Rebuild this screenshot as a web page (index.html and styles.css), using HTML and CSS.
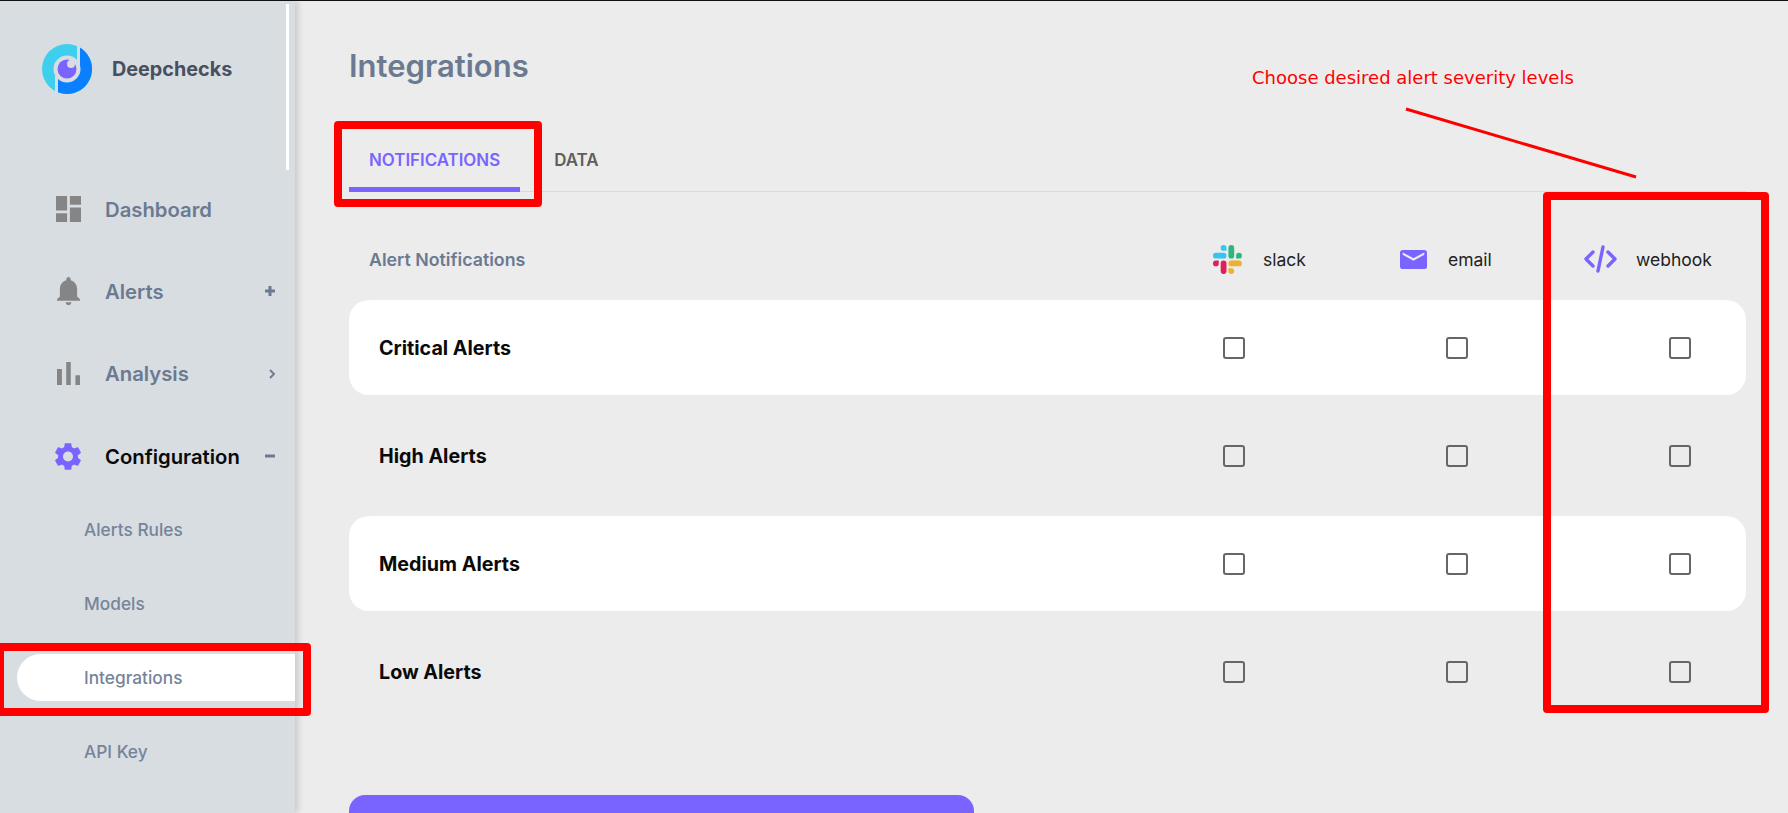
FILE: index.html
```html
<!DOCTYPE html>
<html lang="en">
<head>
    <meta charset="UTF-8">
    <title>Integrations - Deepchecks</title>
    <link rel="stylesheet" href="styles.css">
</head>
<body>
    <div class="app">
        <aside class="sidebar">
            <div class="scroll-thumb"></div>
            <div class="brand">
                <svg class="brand-logo" viewBox="0 0 50 50">
                    <circle cx="25" cy="25" r="25" fill="#3ecfee"/>
                    <path d="M38 3.6A25 25 0 0 1 16 48.3V25H38Z" fill="#0a80ff"/>
                    <path d="M14.5 25V50M36.5 0V25" stroke="#d8dde2" stroke-width="3"/>
                    <circle cx="25" cy="25" r="13.5" fill="#d8dde2"/>
                    <circle cx="25" cy="25" r="9.5" fill="#7964ff"/>
                    <circle cx="29" cy="20" r="4" fill="#d8dde2"/>
                </svg>
                <span class="brand-name">Deepchecks</span>
            </div>
            <nav class="nav">
                <div class="nav-item">
                    <span class="nav-icon">
                        <svg width="25" height="26" viewBox="3 3 18 18" preserveAspectRatio="none"><path d="M3 13h8V3H3v10zm0 8h8v-6H3v6zm10 0h8V11h-8v10zm0-18v6h8V3h-8z"/></svg>
                    </span>
                    <span class="nav-label">Dashboard</span>
                </div>
                <div class="nav-item">
                    <span class="nav-icon">
                        <svg width="23" height="28" viewBox="4 2.5 16 19.5" preserveAspectRatio="none"><path d="M12 22c1.1 0 2-.9 2-2h-4c0 1.1.89 2 2 2zm6-6v-5c0-3.07-1.64-5.64-4.5-6.32V4c0-.83-.67-1.5-1.5-1.5s-1.5.67-1.5 1.5v.68C7.63 5.36 6 7.92 6 11v5l-2 2v1h16v-1l-2-2z"/></svg>
                    </span>
                    <span class="nav-label">Alerts</span>
                    <span class="nav-mark">
                        <svg width="10" height="10" viewBox="0 0 10 10"><path d="M5 0V10M0 5H10" stroke="#6b7a90" stroke-width="3"/></svg>
                    </span>
                </div>
                <div class="nav-item">
                    <span class="nav-icon">
                        <svg width="23" height="23" viewBox="5 5 14 14"><path d="M5 9.2h3V19H5zM10.6 5h2.8v14h-2.8zm5.6 8H19v6h-2.8z"/></svg>
                    </span>
                    <span class="nav-label">Analysis</span>
                    <span class="nav-mark nav-mark-chevron">
                        <svg width="10" height="10" viewBox="0 0 10 10"><path d="M3 1L7 5L3 9" fill="none" stroke="#6b7a90" stroke-width="1.8"/></svg>
                    </span>
                </div>
                <div class="nav-item nav-item-open">
                    <span class="nav-icon">
                        <svg width="26" height="27" viewBox="2.6 2.4 18.8 19.2"><path d="M19.14,12.94c0.04-0.3,0.06-0.61,0.06-0.94c0-0.32-0.02-0.64-0.07-0.94l2.03-1.58c0.18-0.14,0.23-0.41,0.12-0.61l-1.92-3.32c-0.12-0.22-0.37-0.29-0.59-0.22l-2.39,0.96c-0.5-0.38-1.03-0.7-1.62-0.94L14.4,2.81c-0.04-0.24-0.24-0.41-0.48-0.41h-3.84c-0.24,0-0.43,0.17-0.47,0.41L9.25,5.35C8.66,5.59,8.12,5.92,7.63,6.29L5.24,5.33c-0.22-0.08-0.47,0-0.59,0.22L2.74,8.87C2.62,9.08,2.66,9.34,2.86,9.48l2.03,1.58C4.84,11.36,4.8,11.69,4.8,12s0.02,0.64,0.07,0.94l-2.03,1.58c-0.18,0.14-0.23,0.41-0.12,0.61l1.92,3.32c0.12,0.22,0.37,0.29,0.59,0.22l2.39-0.96c0.5,0.38,1.03,0.7,1.62,0.94l0.36,2.54c0.05,0.24,0.24,0.41,0.48,0.41h3.84c0.24,0,0.44-0.17,0.47-0.41l0.36-2.54c0.59-0.24,1.13-0.56,1.62-0.94l2.39,0.96c0.22,0.08,0.47,0,0.59-0.22l1.92-3.32c0.12-0.22,0.07-0.47-0.12-0.61L19.14,12.94z M12,15.6c-1.98,0-3.6-1.62-3.6-3.6s1.62-3.6,3.6-3.6s3.6,1.62,3.6,3.6S13.98,15.6,12,15.6z"/></svg>
                    </span>
                    <span class="nav-label">Configuration</span>
                    <span class="nav-mark">
                        <svg width="10" height="10" viewBox="0 0 10 10"><path d="M0 5H10" stroke="#6b7a90" stroke-width="3"/></svg>
                    </span>
                </div>
                <div class="subnav">
                    <a class="sub-item" href="#">Alerts Rules</a>
                    <a class="sub-item" href="#">Models</a>
                    <a class="sub-item active" href="#">Integrations</a>
                    <a class="sub-item" href="#">API Key</a>
                </div>
            </nav>
        </aside>

        <main class="main">
            <h1 class="title">Integrations</h1>
            <div class="tabs">
                <div class="tab active">NOTIFICATIONS</div>
                <div class="tab">DATA</div>
            </div>

            <div class="table-head">
                <div class="head-title">Alert Notifications</div>
                <div class="channel">
                    <svg class="icon-slack" viewBox="0 0 54 54">
                        <path fill="#36C5F0" d="M19.712.133a5.381 5.381 0 0 0-5.376 5.387 5.381 5.381 0 0 0 5.376 5.386h5.376V5.52A5.381 5.381 0 0 0 19.712.133m0 14.365H5.376A5.381 5.381 0 0 0 0 19.884a5.381 5.381 0 0 0 5.376 5.387h14.336a5.381 5.381 0 0 0 5.376-5.387 5.381 5.381 0 0 0-5.376-5.386"/>
                        <path fill="#2EB67D" d="M53.76 19.884a5.381 5.381 0 0 0-5.376-5.386 5.381 5.381 0 0 0-5.376 5.386v5.387h5.376a5.381 5.381 0 0 0 5.376-5.387m-14.336 0V5.52A5.381 5.381 0 0 0 34.048.133a5.381 5.381 0 0 0-5.376 5.387v14.364a5.381 5.381 0 0 0 5.376 5.387 5.381 5.381 0 0 0 5.376-5.387"/>
                        <path fill="#ECB22E" d="M34.048 54a5.381 5.381 0 0 0 5.376-5.387 5.381 5.381 0 0 0-5.376-5.386h-5.376v5.386A5.381 5.381 0 0 0 34.048 54m0-14.365h14.336a5.381 5.381 0 0 0 5.376-5.386 5.381 5.381 0 0 0-5.376-5.387H34.048a5.381 5.381 0 0 0-5.376 5.387 5.381 5.381 0 0 0 5.376 5.386"/>
                        <path fill="#E01E5A" d="M0 34.249a5.381 5.381 0 0 0 5.376 5.386 5.381 5.381 0 0 0 5.376-5.386v-5.387H5.376A5.381 5.381 0 0 0 0 34.25m14.336-.001v14.364A5.381 5.381 0 0 0 19.712 54a5.381 5.381 0 0 0 5.376-5.387V34.25a5.381 5.381 0 0 0-5.376-5.387 5.381 5.381 0 0 0-5.376 5.387"/>
                    </svg>
                    <span>slack</span>
                </div>
                <div class="channel">
                    <svg class="icon-mail" viewBox="2 4 20 16" preserveAspectRatio="none"><path fill="#7964ff" d="M20 4H4c-1.1 0-2 .9-2 2v12c0 1.1.9 2 2 2h16c1.1 0 2-.9 2-2V6c0-1.1-.9-2-2-2zm0 4l-8 5-8-5V6l8 5 8-5v2z"/></svg>
                    <span>email</span>
                </div>
                <div class="channel channel-code">
                    <svg class="icon-code" viewBox="0 0 33 28">
                        <path d="M9 7L2 14L9 21M24 7L31 14L24 21M19 2L14 26" fill="none" stroke="#7964ff" stroke-width="3.4" stroke-linecap="round" stroke-linejoin="round"/>
                    </svg>
                    <span>webhook</span>
                </div>
            </div>

            <div class="rows">
                <div class="row row-white">
                    <div class="row-name">Critical Alerts</div>
                    <input class="check" type="checkbox">
                    <input class="check" type="checkbox">
                    <input class="check" type="checkbox">
                </div>
                <div class="row">
                    <div class="row-name">High Alerts</div>
                    <input class="check" type="checkbox">
                    <input class="check" type="checkbox">
                    <input class="check" type="checkbox">
                </div>
                <div class="row row-white">
                    <div class="row-name">Medium Alerts</div>
                    <input class="check" type="checkbox">
                    <input class="check" type="checkbox">
                    <input class="check" type="checkbox">
                </div>
                <div class="row">
                    <div class="row-name">Low Alerts</div>
                    <input class="check" type="checkbox">
                    <input class="check" type="checkbox">
                    <input class="check" type="checkbox">
                </div>
            </div>

            <div class="save-button"></div>
        </main>
    </div>

    <!-- red markup drawn over the screenshot -->
    <div class="mark mark-tab"></div>
    <div class="mark mark-side"></div>
    <div class="mark mark-column"></div>
    <div class="mark-text">Choose desired alert severity levels</div>
    <svg class="mark-line" width="1788" height="813"><line x1="1406" y1="109" x2="1636" y2="177" stroke="#ff0000" stroke-width="3"/></svg>
</body>
</html>
```

FILE: styles.css
```css
html, body {
    margin: 0;
    height: 100%;
    overflow: hidden;
}
body {
    background: #ececec;
    font-family: 'Inter', sans-serif;
    border-top: 1px solid #111;
    box-sizing: border-box;
}
.app {
    display: flex;
    height: 812px;
    overflow: hidden;
}
.sidebar {
    position: relative;
    flex: 0 0 295px;
    background: #d8dde2;
    box-shadow: 3px 0 6px rgba(0, 0, 0, 0.15);
    z-index: 1;
}
.scroll-thumb {
    position: absolute;
    left: 286px;
    top: 3px;
    width: 3px;
    height: 166px;
    background: #fff;
}
.brand {
    display: flex;
    align-items: center;
    padding: 43px 0 0 42px;
}
.brand-logo {
    width: 50px;
    height: 50px;
}
.brand-name {
    margin-left: 20px;
    font-size: 19.8px;
    font-weight: 700;
    color: #474f60;
}
.nav {
    margin-top: 74px;
}
.nav-item {
    display: flex;
    align-items: center;
    height: 82.33px;
}
.nav-icon {
    display: flex;
    justify-content: center;
    width: 28px;
    margin-left: 54px;
    fill: #858585;
}
.nav-label {
    margin-left: 23px;
    font-size: 20.3px;
    font-weight: 600;
    color: #6b7a90;
}
.nav-mark {
    display: flex;
    margin-left: auto;
    margin-right: 20px;
}
.nav-mark-chevron {
    margin-right: 18px;
}
.nav-item-open .nav-icon {
    fill: #7964ff;
}
.nav-item-open .nav-label {
    color: #0a0a0a;
}
.subnav {
    display: flex;
    flex-direction: column;
    gap: 27px;
    margin: 9px 0 0 17px;
}
.sub-item {
    display: flex;
    align-items: center;
    height: 47px;
    padding-left: 67px;
    font-size: 17.3px;
    font-weight: 500;
    color: #76849a;
    text-decoration: none;
    border-radius: 24px 0 0 24px;
}
.sub-item.active {
    background: #fff;
}
.main {
    flex: 1;
    padding: 0 42px 0 54px;
}
.title {
    margin: 45px 0 0;
    font-size: 31px;
    line-height: 40px;
    font-weight: 600;
    color: #6b7a90;
}
.tabs {
    display: flex;
    align-items: flex-end;
    height: 105px;
    border-bottom: 1px solid #d9d9d9;
}
.tab {
    padding: 0 20px 11px;
    height: 32px;
    line-height: 32px;
    font-size: 16.9px;
    font-weight: 600;
    color: #5e5e5e;
    border-bottom: 5px solid transparent;
    margin-bottom: -1px;
}
.tab.active {
    color: #7964ff;
    border-bottom-color: #7964ff;
    margin-right: 14px;
}
.table-head {
    display: grid;
    grid-template-columns: 1fr 187px 184px 162px;
    align-items: center;
    box-sizing: border-box;
    height: 108px;
    padding: 26px 0 0 20px;
}
.head-title {
    font-size: 17.8px;
    font-weight: 600;
    color: #6b7a90;
}
.channel {
    display: flex;
    align-items: center;
    gap: 21px;
    font-size: 17.5px;
    color: #222;
}
.channel-code {
    gap: 19px;
}
.icon-slack {
    width: 29px;
    height: 29px;
}
.icon-mail {
    width: 27px;
    height: 19px;
}
.icon-code {
    width: 33px;
    height: 28px;
}
.rows {
    display: flex;
    flex-direction: column;
    gap: 13px;
}
.row {
    display: grid;
    grid-template-columns: 1fr 100px 100px 100px;
    column-gap: 123px;
    align-items: center;
    justify-items: center;
    height: 95px;
    padding: 0 16px 0 30px;
    border-radius: 20px;
}
.row-white {
    background: #fff;
}
.row-name {
    justify-self: start;
    font-size: 19.7px;
    font-weight: 700;
    color: #0a0a0a;
}
.check {
    appearance: none;
    width: 22px;
    height: 22px;
    margin: 0;
    border: 2px solid #666;
    border-radius: 3px;
    background: transparent;
}
.save-button {
    width: 625px;
    height: 60px;
    margin-top: 76px;
    background: #7964ff;
    border-radius: 16px;
}
.mark {
    position: absolute;
    border: 8px solid #ff0000;
    border-radius: 4px;
    box-sizing: border-box;
    z-index: 2;
}
.mark-tab {
    left: 334px;
    top: 121px;
    width: 208px;
    height: 86px;
}
.mark-side {
    left: -4px;
    top: 643px;
    width: 315px;
    height: 73px;
}
.mark-column {
    left: 1543px;
    top: 192px;
    width: 226px;
    height: 521px;
}
.mark-text {
    position: absolute;
    left: 1252px;
    top: 68px;
    font-family: 'DejaVu Sans', sans-serif;
    font-size: 18px;
    line-height: 20px;
    color: #ff0000;
    z-index: 2;
}
.mark-line {
    position: absolute;
    left: 0;
    top: 0;
    pointer-events: none;
    z-index: 2;
}
```
